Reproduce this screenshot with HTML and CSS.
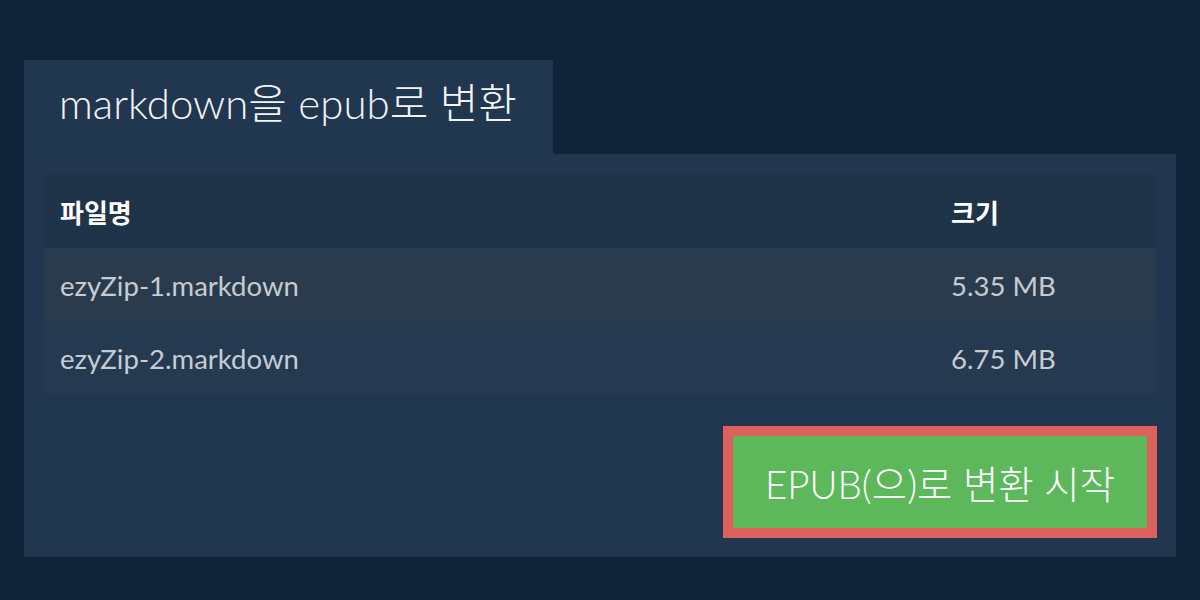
FILE: index.html
```html
<!DOCTYPE html>
<html lang="ko">
<head>
<meta charset="utf-8">
<link rel="stylesheet" href="styles.css">
</head>
<body>
<div class="page">
  <div class="tab"><h1 class="title">markdown을 epub로 변환</h1></div>
  <div class="panel">
    <div class="table">
      <div class="row head"><div class="cell">파일명</div><div class="cell">크기</div></div>
      <div class="row odd"><div class="cell">ezyZip-1.markdown</div><div class="cell">5.35 MB</div></div>
      <div class="row even"><div class="cell">ezyZip-2.markdown</div><div class="cell">6.75 MB</div></div>
    </div>
    <div class="actions">
      <button class="convert">EPUB(으)로 변환 시작</button>
    </div>
  </div>
</div>
</body>
</html>
```

FILE: styles.css
```css
html, body {
  margin: 0;
  padding: 0;
  background: #0f2339;
}
body {
  font-family: Lato, "Noto Sans CJK KR", sans-serif;
}
.page {
  padding: 60px 24px 43px 24px;
}
.tab {
  width: 529px;
  height: 94px;
  background: #21364f;
  display: flex;
  align-items: center;
  padding-left: 35px;
  box-sizing: border-box;
}
.title {
  margin: 0;
  font-weight: 300;
  font-size: 42px;
  color: #f2f4f6;
  line-height: 1;
  position: relative;
  top: -4px;
}
.panel {
  background: #21364f;
  padding: 20px 20px 19px 20px;
}
.table {
  display: flex;
  flex-direction: column;
}
.row {
  display: grid;
  grid-template-columns: 1fr 221px;
  align-items: center;
}
.cell {
  padding-left: 16px;
}
.head {
  height: 74px;
  background: #1f3349;
  color: #ffffff;
  font-weight: 700;
  font-size: 26px;
  font-family: "Noto Sans CJK KR", sans-serif;
}
.odd {
  height: 74px;
  background: #2b3b4e;
}
.even {
  height: 72px;
  background: #253951;
}
.odd, .even {
  color: #c6ccd3;
  font-size: 27.5px;
}
.actions {
  display: flex;
  justify-content: flex-end;
  margin-top: 32px;
}
.convert {
  width: 434px;
  height: 112px;
  margin-right: -1px;
  border: 10px solid #dc615d;
  background: #5db85c;
  color: #ffffff;
  font-family: Lato, "Noto Sans CJK KR", sans-serif;
  font-weight: 300;
  font-size: 38.5px;
  padding: 0;
}
```
